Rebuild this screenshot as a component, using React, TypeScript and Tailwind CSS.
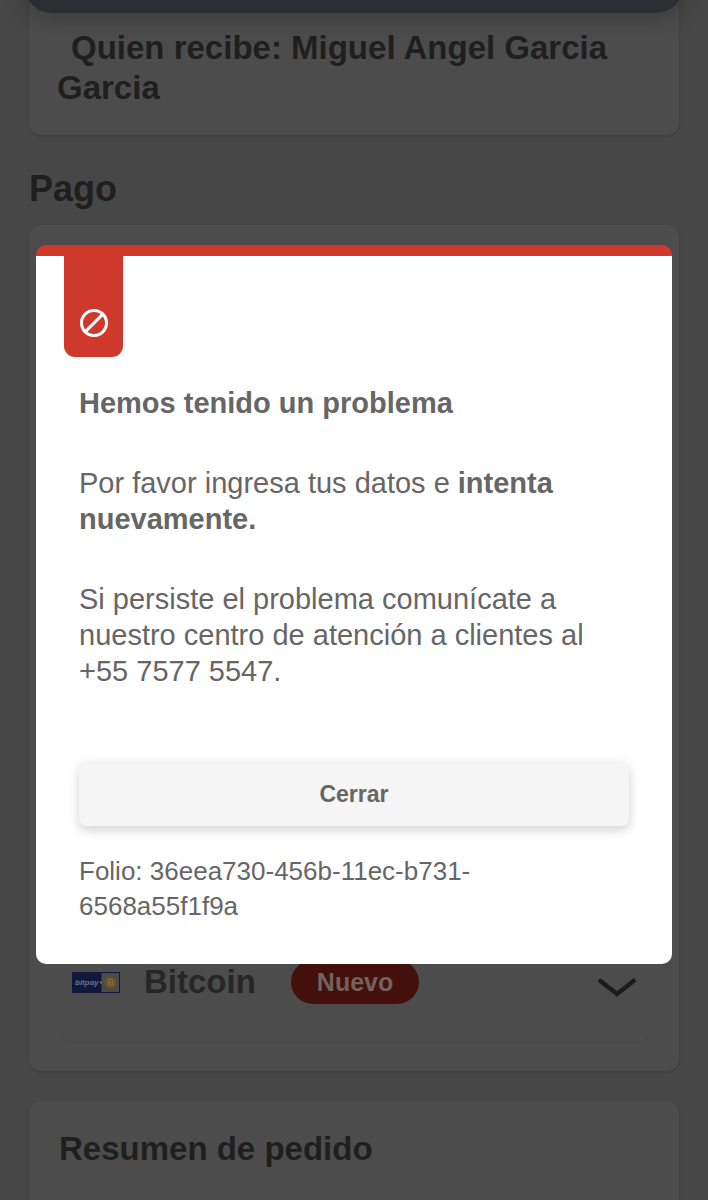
import { useId, useState } from "react";

type ErrorDialogProps = {
  folio: string;
  onClose: () => void;
};

function BlockIcon() {
  return (
    <svg viewBox="0 0 28 28" className="size-7" fill="none" stroke="#fff" strokeWidth="3" aria-hidden="true">
      <circle cx="14" cy="14" r="12.5" />
      <path d="M5.4 22.6 22.6 5.4" />
    </svg>
  );
}

function BitpayLogo() {
  return (
    <svg viewBox="0 0 48 21" className="h-[21px] w-12 shrink-0" role="img" aria-label="bitpay">
      <rect width="48" height="21" fill="#11183b" />
      <rect x="29.5" y="1" width="17.5" height="19" fill="#4b4b4d" />
      <text
        x="3"
        y="13"
        fill="#6c7088"
        fontFamily="Liberation Sans, sans-serif"
        fontSize="8"
        fontStyle="italic"
        fontWeight="700"
      >
        bitpay
      </text>
      <path d="M28 10.5h2" stroke="#6c7088" strokeWidth="2" />
      <circle cx="38.5" cy="10.5" r="6" fill="#6b5222" />
      <path
        d="M36.8 7.5h2.4a1.4 1.4 0 0 1 0 3h-2.4zm0 3h2.8a1.5 1.5 0 0 1 0 3.1h-2.8z"
        fill="none"
        stroke="#85724c"
        strokeWidth="1"
      />
    </svg>
  );
}

function ErrorDialog({ folio, onClose }: ErrorDialogProps) {
  const titleId = useId();

  return (
    <div className="fixed inset-0 z-20 flex items-center justify-center px-9 pt-2">
      <div
        role="dialog"
        aria-modal="true"
        aria-labelledby={titleId}
        className="w-full text-[29px] leading-9 text-[#666]"
      >
        <div className="h-[11px] rounded-t-[10px] bg-[#cf392c]" />
        <div className="rounded-b-[10px] bg-white">
          <div className="ml-7 flex h-[101px] w-[59px] items-end justify-center rounded-b-[11px] bg-[#cf392c] pb-5">
            <BlockIcon />
          </div>
          <div className="px-[43px] pt-7 pb-10">
            <h1 id={titleId} className="font-bold">
              Hemos tenido un problema
            </h1>
            <p className="mt-11">
              Por favor ingresa tus datos e <strong className="font-bold">intenta nuevamente.</strong>
            </p>
            <p className="mt-11">
              Si persiste el problema comunícate a nuestro centro de atención a clientes al +55 7577 5547.
            </p>
            <button
              type="button"
              onClick={onClose}
              className="mt-[73px] h-16 w-full rounded-lg bg-[#f5f5f5] text-[23px] font-bold shadow-[0_4px_12px_rgba(0,0,0,0.18)]"
            >
              Cerrar
            </button>
            <p className="mt-7 text-[26px] leading-[35px]">Folio: {folio}</p>
          </div>
        </div>
      </div>
    </div>
  );
}

export default function App() {
  const [open, setOpen] = useState(true);

  return (
    <div className="relative h-screen overflow-hidden bg-[#474747] font-['Liberation_Sans',Arial,sans-serif] text-[#1f1f1f]">
      <div className="absolute inset-x-6 -top-7 z-10 h-[41px] rounded-b-[28px] bg-[#2b2d33] shadow-[0_4px_24px_rgba(0,0,0,0.25)]" />

      <main className="px-[29px]">
        <section className="rounded-b-xl bg-[#4c4c4c] px-7 pt-7 pb-[27px] shadow-[0_1px_3px_rgba(0,0,0,0.15)]">
          <p className="indent-[14px] text-[33px] leading-10 font-bold">
            Quien recibe: Miguel Angel Garcia Garcia
          </p>
        </section>

        <h2 className="mt-[34px] text-[36px] leading-10 font-bold">Pago</h2>

        <section className="mt-4 flex min-h-[846px] flex-col justify-end rounded-xl bg-[#4c4c4c] px-[30px] pb-7 shadow-[0_1px_3px_rgba(0,0,0,0.15)]">
          <div className="flex items-center rounded-xl border-b border-[#444] px-[13px] pb-[38px]">
            <BitpayLogo />
            <span className="ml-6 text-[33px] leading-10 font-bold text-[#262626]">Bitcoin</span>
            <span className="ml-[35px] rounded-full bg-[#43100c] px-[26px] py-1 text-[25px] leading-9 font-bold text-[#75605f]">
              Nuevo
            </span>
            <button type="button" aria-label="Mostrar Bitcoin" className="ml-auto pt-3">
              <svg viewBox="0 0 38 20" className="h-5 w-[38px]" fill="none" aria-hidden="true">
                <path
                  d="M2.5 3 19 16 35.5 3"
                  stroke="#1c1c1c"
                  strokeWidth="4.5"
                  strokeLinecap="round"
                />
              </svg>
            </button>
          </div>
        </section>

        <section className="mt-[30px] rounded-xl bg-[#4c4c4c] px-[30px] pt-7 pb-12 shadow-[0_1px_3px_rgba(0,0,0,0.15)]">
          <h2 className="text-[33px] leading-10 font-bold">Resumen de pedido</h2>
        </section>
      </main>

      {open ? (
        <ErrorDialog folio="36eea730-456b-11ec-b731-6568a55f1f9a" onClose={() => setOpen(false)} />
      ) : null}
    </div>
  );
}
